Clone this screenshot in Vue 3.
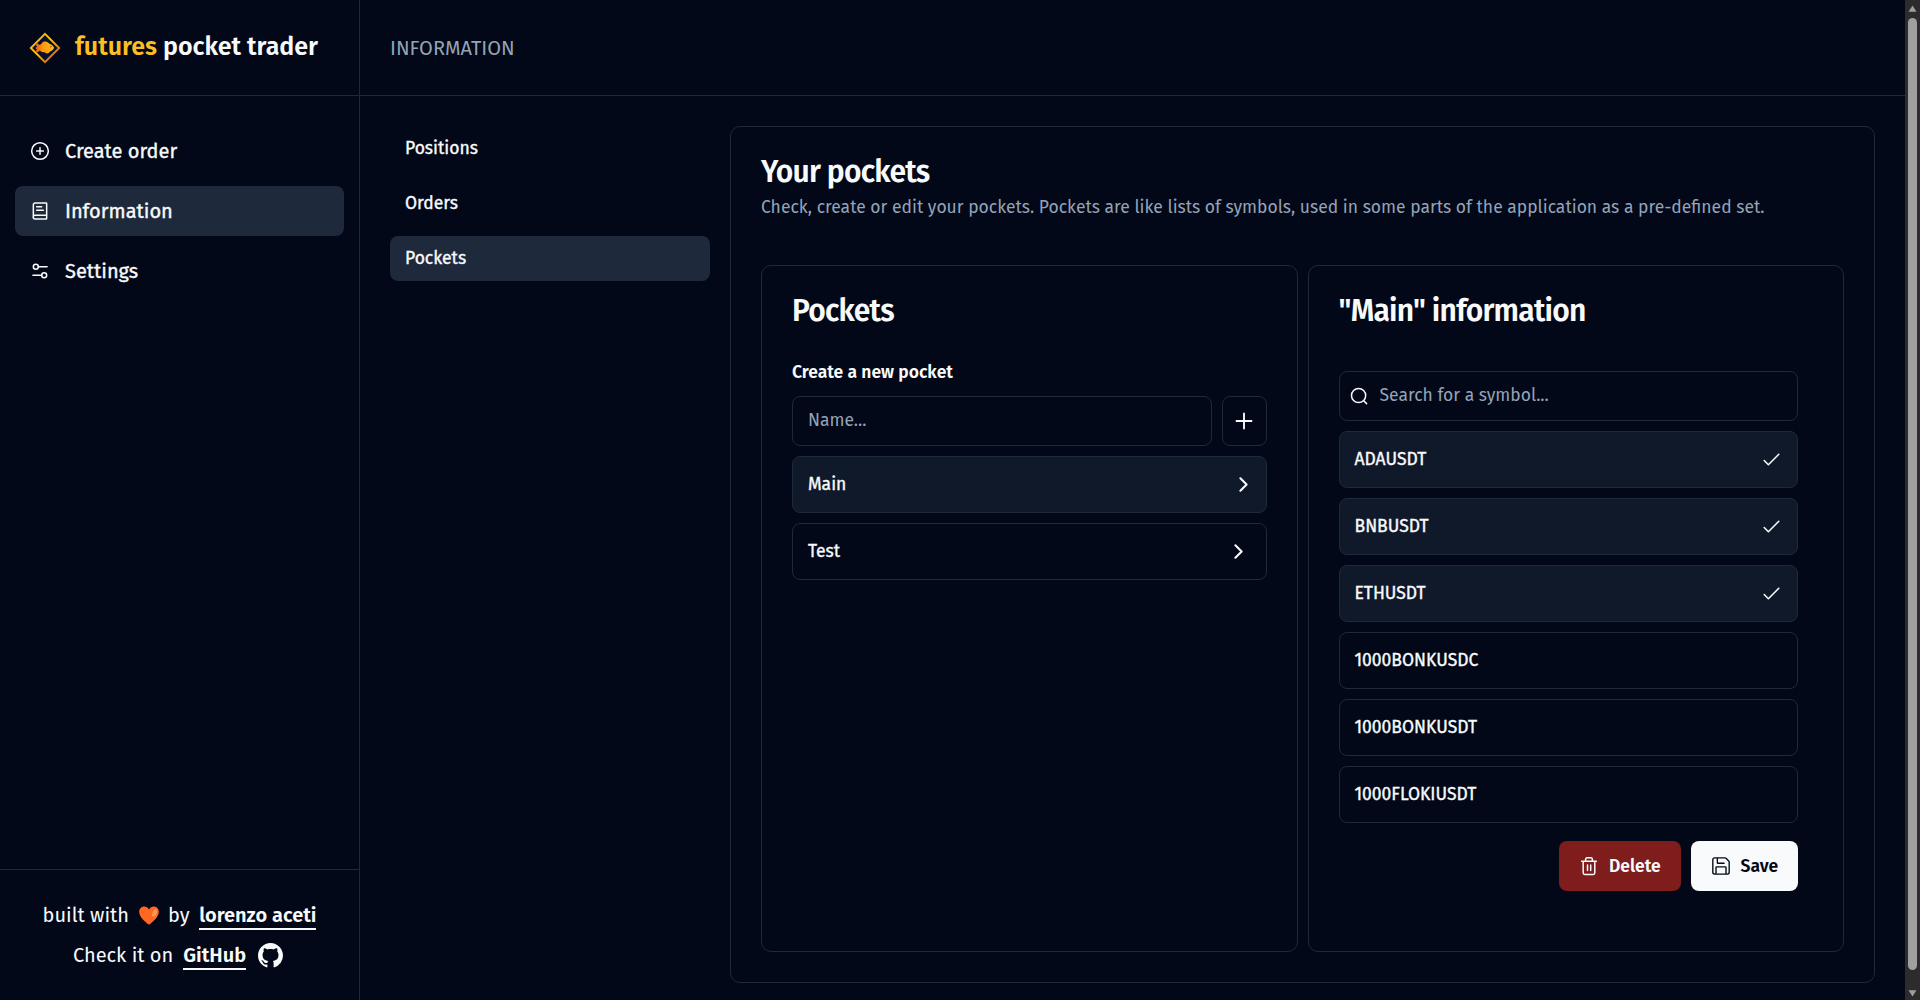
<script setup>
import { ref } from 'vue'

const nav = [
  { label: 'Create order', icon: 'plus' },
  { label: 'Information', icon: 'journal', active: true },
  { label: 'Settings', icon: 'sliders' },
]
const tabs = [
  { label: 'Positions' },
  { label: 'Orders' },
  { label: 'Pockets', active: true },
]
const pockets = [{ name: 'Main', active: true }, { name: 'Test' }]
const symbols = [
  { name: 'ADAUSDT', selected: true },
  { name: 'BNBUSDT', selected: true },
  { name: 'ETHUSDT', selected: true },
  { name: '1000BONKUSDC' },
  { name: '1000BONKUSDT' },
  { name: '1000FLOKIUSDT' },
]
const pocketName = ref('')
const query = ref('')
</script>

<template>
  <div class="app">
    <aside class="sidebar">
      <header class="brand">
        <svg class="logo" width="32" height="32" viewBox="0 0 32 32">
          <defs>
            <linearGradient id="gold" x1="0" y1="0" x2="1" y2="1">
              <stop offset="0" stop-color="#f59e0b" />
              <stop offset=".45" stop-color="#facc15" />
              <stop offset="1" stop-color="#c2410c" />
            </linearGradient>
            <linearGradient id="fish" x1="0" y1="0" x2="1" y2="0">
              <stop offset="0" stop-color="#e8590c" />
              <stop offset=".4" stop-color="#fb9a0b" />
              <stop offset="1" stop-color="#fdbf13" />
            </linearGradient>
          </defs>
          <path d="M16 1.8 30.2 16 16 30.2 1.8 16Z" fill="#0b1030" stroke="url(#gold)" stroke-width="1.9" />
          <path
            d="M6.800 11.200c1.600 0 2.900.8 3.900 1.900.7-.6 1.300-1 1.900-1.300.3-1.700 1.700-2.700 4-2.300 1.500.2 2.700.9 3.400 1.900 2.500.7 4.300 2.300 5.100 4.400-.5 1.700-2.200 3.100-4.100 3.800-.7 1.100-1.700 2-3.600 2-.5-.7-1-1.100-1.800-1.300-2 0-3.600-.7-4.900-1.900-1 1.200-2.200 2.100-4.100 2.100.1-1.400.6-2.300 1.500-3-.8-.3-1.400-.8-1.700-1.500.5-.6 1.100-.8 1.700-.9-.7-1-1.200-2.400-1.300-3.900Z"
            fill="url(#fish)"
          />
          <circle cx="21.800" cy="14.800" r=".7" fill="#9a3412" />
        </svg>
        <h1><em>futures</em> pocket trader</h1>
      </header>

      <nav class="nav">
        <a v-for="item in nav" :key="item.label" class="nav-item" :class="{ active: item.active }">
          <svg class="line" width="20" height="20" viewBox="0 0 24 24">
            <template v-if="item.icon === 'plus'">
              <circle cx="12" cy="12" r="10" />
              <path d="M8 12h8M12 8v8" />
            </template>
            <template v-else-if="item.icon === 'journal'">
              <path d="M4 19V4.500a2 2 0 0 1 2-2h13.400a.6.6 0 0 1 .6.6v17.800a.6.6 0 0 1-.6.6H6a2 2 0 1 1 0-4.500h14M8 7h6M8 11h8" />
            </template>
            <template v-else>
              <circle cx="7" cy="7" r="3" />
              <circle cx="17" cy="17" r="3" />
              <path d="M10 7h10.500M3.500 17H14" />
            </template>
          </svg>
          <span>{{ item.label }}</span>
        </a>
      </nav>

      <footer class="credits">
        <p>
          <span>built with</span>
          <svg class="heart" width="20" height="19" viewBox="0 0 20 19">
            <path d="M10 18.800C5.500 15.400.2 11 .2 5.700.2 2.600 2.500.5 5.200.5c2 0 3.800 1.100 4.800 3 1-1.900 2.800-3 4.800-3 2.700 0 5 2.100 5 5.200 0 5.300-5.300 9.700-9.800 13.100Z" fill="#ff6723" />
            <path d="M16.600 3c1.700.7 2.100 3 .9 5.200-1.200 2-3.100 2.900-4.100 2-.9-.9-.4-2.300.6-4.300.8-1.700 1.500-3.300 2.600-2.900Z" fill="#ff9a50" />
          </svg>
          <span>by</span>
          <a>lorenzo aceti</a>
        </p>
        <p class="source">
          <span>Check it on</span>
          <a>GitHub</a>
          <svg class="github" width="25" height="25" viewBox="0 0 16 16" fill="#f8fafc">
            <path d="M8 0C3.580 0 0 3.580 0 8c0 3.540 2.290 6.530 5.470 7.590.4.070.55-.17.55-.38 0-.19-.01-.82-.01-1.490-2.010.37-2.530-.49-2.690-.94-.09-.23-.48-.94-.82-1.130-.28-.15-.68-.52-.01-.53.63-.01 1.080.58 1.230.82.72 1.210 1.870.87 2.330.66.070-.52.28-.87.51-1.070-1.780-.2-3.640-.89-3.640-3.950 0-.87.31-1.590.82-2.150-.08-.2-.36-1.020.08-2.120 0 0 .67-.21 2.200.82.64-.18 1.320-.27 2-.27s1.360.09 2 .27c1.530-1.040 2.200-.82 2.200-.82.44 1.100.16 1.920.08 2.120.51.56.82 1.270.82 2.150 0 3.070-1.870 3.750-3.650 3.950.29.25.54.73.54 1.480 0 1.070-.01 1.930-.01 2.200 0 .21.15.46.55.38A8.010 8.010 0 0 0 16 8c0-4.420-3.580-8-8-8Z" />
          </svg>
        </p>
      </footer>
    </aside>

    <main class="main">
      <header class="topbar">INFORMATION</header>
      <div class="content">
        <nav class="tabs">
          <a v-for="tab in tabs" :key="tab.label" :class="{ active: tab.active }">{{ tab.label }}</a>
        </nav>

        <section class="card outer">
          <h2>Your pockets</h2>
          <p class="lead">
            Check, create or edit your pockets. Pockets are like lists of symbols, used in some parts of the application as a pre-defined set.
          </p>

          <div class="columns">
            <section class="card">
              <h2>Pockets</h2>
              <label class="label" for="pocket-name">Create a new pocket</label>
              <div class="create">
                <input id="pocket-name" v-model="pocketName" class="field" placeholder="Name..." />
                <button class="add">
                  <svg class="line" width="30" height="30" viewBox="0 0 24 24"><path d="M6 12h12M12 6v12" /></svg>
                </button>
              </div>
              <div class="list">
                <div v-for="p in pockets" :key="p.name" class="row pocket" :class="{ active: p.active }">
                  <span>{{ p.name }}</span>
                  <svg class="line" width="25" height="25" viewBox="0 0 24 24"><path stroke-width="2" d="m9 6 6 6-6 6" /></svg>
                </div>
              </div>
            </section>

            <section class="card info">
              <h2>"Main" information</h2>
              <div class="search">
                <svg class="line" width="20" height="20" viewBox="0 0 20 20">
                  <circle cx="9.600" cy="9.500" r="7.100" />
                  <path d="m14.700 14.700 2.900 2.900" />
                </svg>
                <input v-model="query" placeholder="Search for a symbol..." />
              </div>
              <div class="list">
                <div v-for="s in symbols" :key="s.name" class="row" :class="{ active: s.selected }">
                  <span>{{ s.name }}</span>
                  <svg v-if="s.selected" class="line" width="25" height="25" viewBox="0 0 24 24"><path d="m5 13 4 4L19 7" /></svg>
                </div>
              </div>
              <div class="actions">
                <button class="btn danger">
                  <svg class="line" width="20" height="20" viewBox="0 0 20 20">
                    <path d="M2.600 5.300h14.800M6.600 5.300V3.400c0-1 .7-1.700 1.600-1.700h3.600c.9 0 1.600.7 1.600 1.700v1.900M4.200 5.300v11.400c0 1 .6 1.700 1.600 1.700h8.400c1 0 1.600-.7 1.600-1.700V5.300M8.500 9v5.600M11.700 9v5.600" />
                  </svg>
                  Delete
                </button>
                <button class="btn primary">
                  <svg class="line" width="20" height="20" viewBox="1 1 22 22">
                    <path d="M3 19V5a2 2 0 0 1 2-2h11.172a2 2 0 0 1 1.414.586l2.828 2.828A2 2 0 0 1 21 7.828V19a2 2 0 0 1-2 2H5a2 2 0 0 1-2-2ZM8 3v5.400a.6.6 0 0 0 .6.6h6.800M6.500 21v-7.400a.6.6 0 0 1 .6-.6h9.800a.6.6 0 0 1 .6.6V21" />
                  </svg>
                  Save
                </button>
              </div>
            </section>
          </div>
        </section>
      </div>
    </main>

    <div class="scrollbar">
      <svg width="9" height="8" viewBox="0 0 9 8"><path d="M4.500.6 8.500 6.800H.5Z" /></svg>
      <i></i>
      <svg width="9" height="8" viewBox="0 0 9 8"><path d="M4.500 7.400.5 1.200h8Z" /></svg>
    </div>
  </div>
</template>

<style>
body {
  background: #020817;
  overflow: hidden;
}
</style>

<style scoped>
* {
  box-sizing: border-box;
  margin: 0;
}
.app {
  display: flex;
  height: 1000px;
  background: #020817;
  color: #f8fafc;
  font: 400 17.5px/25px 'Fira Sans', 'Noto Sans', sans-serif;
}
.line {
  flex: none;
  fill: none;
  stroke: currentColor;
  stroke-width: 1.5;
  stroke-linecap: round;
  stroke-linejoin: round;
}
.nav-item span,
.tabs a,
.row span {
  -webkit-text-stroke: 0.35px currentColor;
}

.sidebar {
  flex: none;
  display: flex;
  flex-direction: column;
  width: 360px;
  border-right: 1px solid #1e293b;
}
.brand {
  display: flex;
  align-items: center;
  gap: 14px;
  height: 96px;
  padding: 0 29px;
  border-bottom: 1px solid #1e293b;
}
h1 {
  font-size: 25px;
  font-weight: 600;
  line-height: 35px;
  padding-bottom: 1px;
  white-space: nowrap;
}
h1 em {
  font-style: normal;
  color: #fbbf24;
}
.nav {
  flex: 1;
  display: flex;
  flex-direction: column;
  gap: 10px;
  padding: 30px 15px;
}
.nav-item {
  display: flex;
  align-items: center;
  gap: 15px;
  height: 50px;
  padding: 0 15px;
  border-radius: 8px;
  font-size: 20px;
}
.nav-item .line {
  stroke-width: 1.8;
}
.active {
  background: #1e293b;
}
.credits {
  display: flex;
  flex-direction: column;
  gap: 11px;
  height: 131px;
  padding-top: 31px;
  border-top: 1px solid #1e293b;
  font-size: 20px;
}
.credits p {
  display: flex;
  justify-content: center;
  align-items: center;
  gap: 9.500px;
  height: 29px;
}
.credits .source {
  gap: 10px;
  padding-right: 3px;
}
.credits a {
  height: 29px;
  line-height: 29px;
  border-bottom: 2px solid #f8fafc;
  font-weight: 600;
}
.credits span {
  line-height: 29px;
}
.github {
  margin-left: 2px;
}

.main {
  flex: 1;
  min-width: 0;
}
.topbar {
  height: 96px;
  padding-left: 30px;
  border-bottom: 1px solid #1e293b;
  color: #94a3b8;
  font-size: 20px;
  line-height: 96px;
}
.content {
  display: flex;
  gap: 20px;
  padding: 30px;
}
.tabs {
  flex: none;
  display: flex;
  flex-direction: column;
  gap: 10px;
  width: 320px;
}
.tabs a {
  height: 45px;
  padding: 0 15px;
  border-radius: 8px;
  line-height: 45px;
}
.card {
  border: 1px solid #1e293b;
  border-radius: 10px;
  padding: 30px;
}
.outer {
  flex: 1;
  min-width: 0;
  height: 857px;
}
h2 {
  font-size: 30px;
  line-height: 30px;
  font-weight: 600;
  letter-spacing: -0.025em;
}
.lead {
  margin-top: 7.500px;
  color: #94a3b8;
  white-space: nowrap;
}
.columns {
  display: grid;
  grid-template-columns: 1fr 1fr;
  gap: 10px;
  height: 687px;
  margin-top: 45.500px;
}
.label {
  display: block;
  margin: 34px 0 11px;
  font-weight: 600;
}
input {
  min-width: 0;
  background: transparent;
  color: inherit;
  font: inherit;
  outline: none;
}
input::placeholder {
  color: #94a3b8;
  opacity: 1;
}
.create {
  display: flex;
  gap: 10px;
  margin-bottom: 10px;
}
.field {
  flex: 1;
  height: 50px;
  padding: 0 15px 2px;
  border: 1px solid #1e293b;
  border-radius: 8px;
}
.add {
  display: grid;
  place-items: center;
  width: 45px;
  height: 50px;
  padding: 0;
  background: transparent;
  border: 1px solid #1e293b;
  border-radius: 8px;
  color: inherit;
}
.list {
  display: flex;
  flex-direction: column;
  gap: 10px;
}
.row {
  display: flex;
  align-items: center;
  justify-content: space-between;
  height: 57px;
  padding: 0 13px 0 15px;
  border: 1px solid #1e293b;
  border-radius: 8px;
}
.row.active {
  background: #101929;
}
.pocket {
  padding-right: 15px;
}
.pocket.active {
  padding-right: 10px;
}
.info {
  padding-right: 45px;
}
.search {
  display: flex;
  align-items: center;
  gap: 11px;
  height: 50px;
  margin: 45px 0 10px;
  padding-left: 9px;
  border: 1px solid #1e293b;
  border-radius: 8px;
}
.search input {
  flex: 1;
  height: 48px;
  padding: 0 0 2px;
  border: 0;
}
.actions {
  display: flex;
  justify-content: flex-end;
  gap: 10px;
  margin-top: 18px;
}
.btn {
  display: flex;
  align-items: center;
  gap: 10px;
  height: 50px;
  padding: 0 20px;
  border: 0;
  border-radius: 8px;
  font: 600 17.5px/25px 'Fira Sans', 'Noto Sans', sans-serif;
}
.danger {
  width: 122px;
  background: #7f1d1d;
  color: #f8fafc;
}
.primary {
  width: 107px;
  gap: 9.500px;
  background: #f8fafc;
  color: #020817;
}
.scrollbar {
  flex: none;
  display: flex;
  flex-direction: column;
  align-items: center;
  width: 15px;
  padding: 5px 0 3px;
  background: #2c2c2c;
  fill: #9f9f9f;
}
.scrollbar i {
  width: 9px;
  height: 952px;
  margin: 5px 0 auto;
  border-radius: 5px;
  background: #9f9f9f;
}
</style>
